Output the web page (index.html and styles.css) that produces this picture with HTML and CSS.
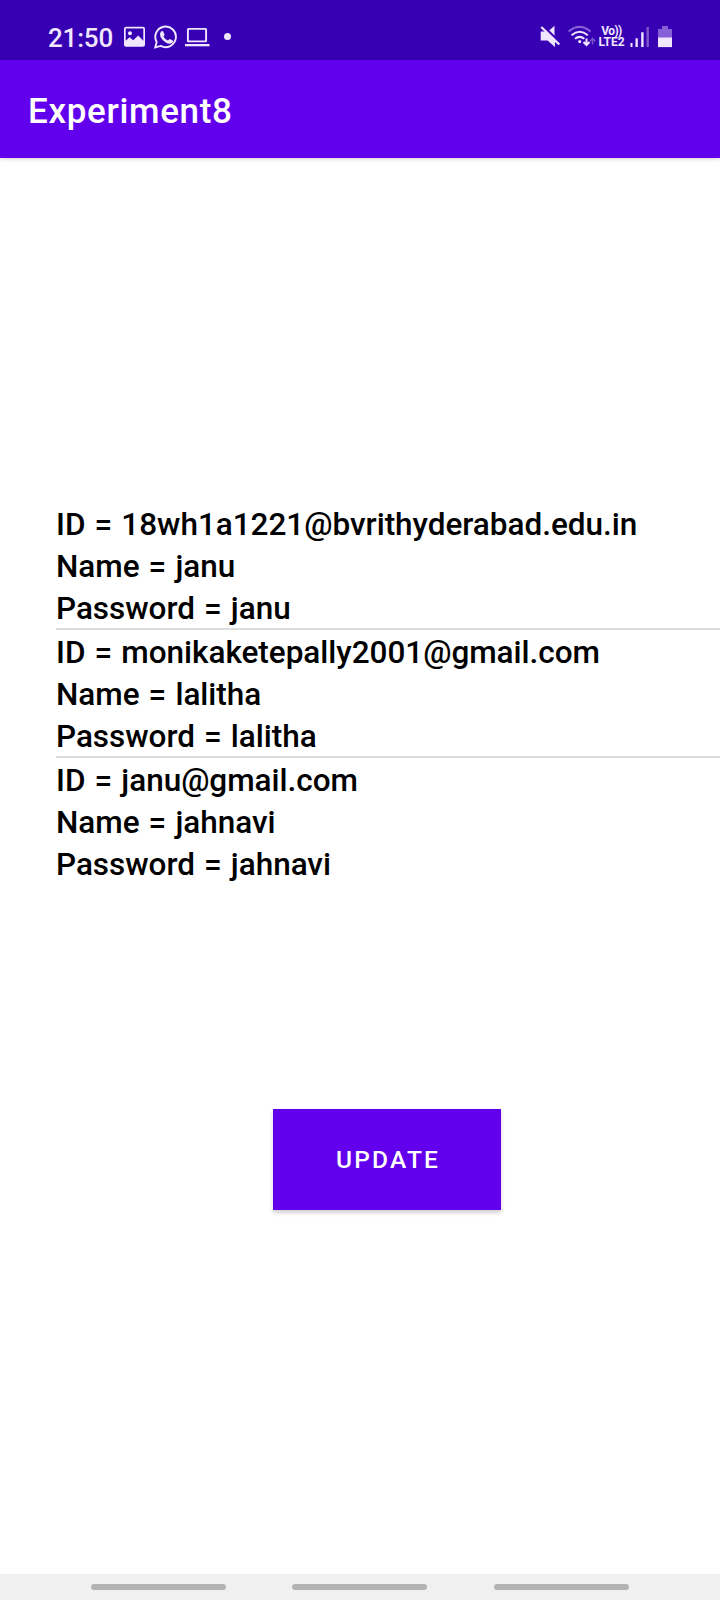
FILE: index.html
```html
<!DOCTYPE html>
<html lang="en">
<head>
<meta charset="utf-8">
<title>Experiment8</title>
<link rel="stylesheet" href="styles.css">
</head>
<body>
<div class="screen">
  <header class="status-bar">
    <div class="status-left">
      <span class="clock">21:50</span>
      <svg class="icon" width="22" height="24" viewBox="124 25 22 24"><path fill="#f0e6ff" fill-rule="evenodd" d="M126 26.700h17q2 0 2 2v16q0 2-2 2h-17q-2 0-2-2v-16q0-2 2-2zM125.700 28.500v12.200l3.900-3.500 3.600 3 5-4.600 5.100 5.100V28.500zM130 31.200a2 2 0 1 1-.01 0z"/></svg>
      <svg class="icon" width="24" height="24" viewBox="154 25 24 24"><path fill="none" stroke="#f0e6ff" stroke-width="1.900" d="M155.200 47.500l1.500-5.500a10.300 10.300 0 1 1 4 3.900z"/><path fill="#f0e6ff" d="M160.700 32q1.600-1.900 2.700-.2l1.100 2.600q.2.800-1.100 2.200 1.500 2.900 4.500 4 1.300-1.700 1.900-1.700l3 1.500q.9.700-.5 2.400-2.300 2.200-6.500-.2-3.600-2.200-5.300-5.500-1.400-3.100.2-5.100z"/></svg>
      <svg class="icon" width="26" height="24" viewBox="184 25 26 24"><path fill="none" stroke="#f0e6ff" stroke-width="1.900" d="M188.500 28.900h17q.6 0 .6.600v11.300q0 .6-.6.600h-17q-.6 0-.6-.6V29.500q0-.6.600-.6z"/><path fill="#f0e6ff" d="M185 44h24.500v2.300H185z"/></svg>
      <span class="more-dot"></span>
    </div>
    <div class="status-right">
      <svg class="icon" width="22" height="24" viewBox="540 25 22 24"><path fill="#f0e6ff" d="M541 31.500h5l9 9.500v6l-7.500-6.500h-6.800V32zM548.300 31.200l6.200-5.400v12z"/><path stroke="#3700b3" stroke-width="2" d="M543 25.500l19 19"/><path stroke="#f0e6ff" stroke-width="2.300" d="M541.300 27l18 17.500"/></svg>
      <svg class="icon wifi" width="28" height="24" viewBox="568 25 28 24"><g fill="none" stroke="#f0e6ff" stroke-width="2"><path stroke="#875fd6" d="M568.600 31.500q11-9.200 22 0"/><path d="M571.500 35.200q8.200-6.900 16.300 0M575 38.800q4.600-3.800 9.300 0"/><path d="M586.500 38.500v6.500M583.500 42l3 3 3-3"/><path stroke="#7651cb" stroke-width="1.600" d="M592.600 44.500v-6M590 41.200l2.600-2.700 2.600 2.700"/></g><circle cx="579.700" cy="41.600" r="1.600" fill="#f0e6ff"/></svg>
      <div class="network"><span class="vo">Vo))</span><span class="lte">LTE2</span></div>
      <svg class="icon signal" width="20" height="24" viewBox="630 25 20 24"><path fill="#f0e6ff" d="M630.500 43h2v4h-2zM635.500 38.200h2.300V47h-2.300zM641.200 32.300h2.400V47h-2.400z"/><path fill="#7e5acc" d="M646.500 27h2.400v20h-2.400z"/></svg>
      <svg class="icon battery" width="14" height="24" viewBox="658 25 14 24"><path fill="#875fd6" d="M662 26h6v3h4v9h-14v-9h4z"/><path fill="#f0e6ff" d="M658 37.500h14v9.600h-14z"/></svg>
    </div>
  </header>
  <div class="app-bar"><h1 class="title">Experiment8</h1></div>
  <main class="content">
    <div class="records">
      <div class="record"><div>ID = 18wh1a1221@bvrithyderabad.edu.in</div><div>Name = janu</div><div>Password = janu</div></div>
      <div class="record"><div>ID = monikaketepally2001@gmail.com</div><div>Name = lalitha</div><div>Password = lalitha</div></div>
      <div class="record"><div>ID = janu@gmail.com</div><div>Name = jahnavi</div><div>Password = jahnavi</div></div>
    </div>
    <button class="update">UPDATE</button>
  </main>
  <nav class="nav-bar"><span class="pill"></span><span class="pill"></span><span class="pill"></span></nav>
</div>
</body>
</html>
```
FILE: styles.css
```css
* { box-sizing: border-box; }
body { margin: 0; background: #fff; font-family: Roboto, "Noto Sans", sans-serif; font-weight: 500; }
.screen { width: 720px; height: 1600px; display: flex; flex-direction: column; overflow: hidden; }
.status-bar { flex: none; height: 60px; padding: 0 48px; background: #3700b3; color: #f0e6ff; display: flex; justify-content: space-between; }
.status-left, .status-right { display: flex; align-items: flex-start; padding-top: 25px; }
.icon { display: block; flex: none; }
.clock { width: 68px; margin-right: 8px; margin-top: -2px; font-size: 26px; line-height: 30px; letter-spacing: -.2px; white-space: nowrap; }
.status-left .icon { margin-right: 8px; }
.status-left .icon + .icon + .icon { margin-left: -2px; }
.more-dot { width: 7px; height: 7px; border-radius: 50%; background: #f0e6ff; margin: 8px 0 0 6px; }
.wifi { margin-left: 6px; }
.network { width: 29px; margin-left: 1px; margin-right: 1px; display: flex; flex-direction: column; align-items: center; font-size: 12px; font-weight: 700; line-height: 11px; padding-top: 1px; white-space: nowrap; }
.vo { letter-spacing: -.6px; }
.signal { margin-left: 3px; }
.battery { margin-left: 8px; }
.app-bar { flex: none; height: 98px; padding-left: 28px; background: #6200ee; display: flex; align-items: center; box-shadow: 0 1px 4px rgba(0, 0, 0, .18); }
.title { margin: 6px 0 0; color: #fff; font-size: 35px; font-weight: 500; line-height: 42px; letter-spacing: .65px; }
.content { flex: 1; padding-top: 344px; display: flex; flex-direction: column; align-items: flex-start; }
.records { width: 100%; height: 382px; padding-left: 56px; }
.record { height: 126px; padding-top: 2px; color: #000; font-size: 31.5px; line-height: 42px; letter-spacing: -.03px; word-spacing: 1.3px; white-space: nowrap; }
.record + .record { height: 128px; border-top: 2px solid #dedede; }
.update { width: 228px; height: 101px; margin: 225px 0 0 273px; padding: 0 0 1px 2px; border: 0; background: #6200ee; color: #fff; font: 500 24.5px Roboto, sans-serif; letter-spacing: 2.2px; box-shadow: 0 3px 4px rgba(0, 0, 0, .18); }
.nav-bar { flex: none; height: 26px; padding: 10px 91px 0; background: #f0f0f0; display: flex; gap: 66px; }
.pill { flex: none; width: 135px; height: 6px; border-radius: 3px; background: #b3b3b3; }
.pill:last-child { margin-left: 1px; }
```
